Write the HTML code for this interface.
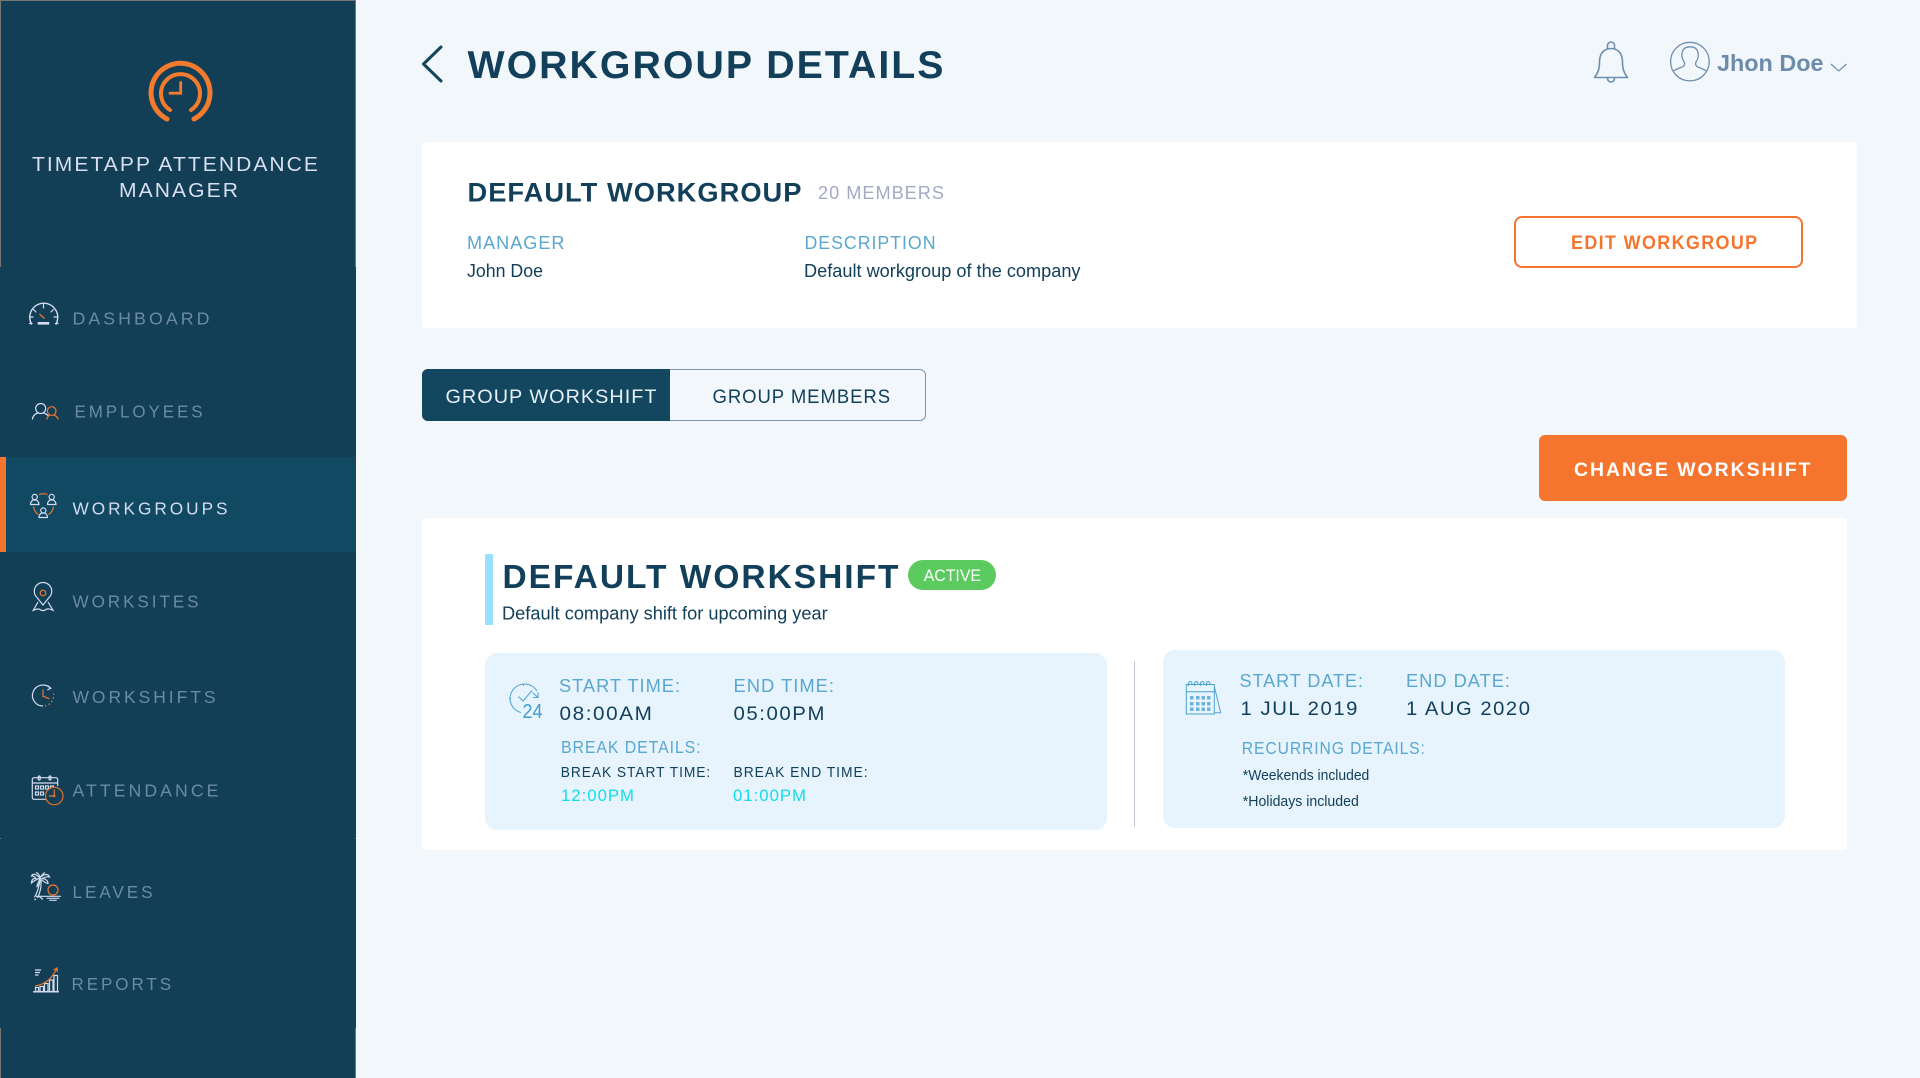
<!DOCTYPE html>
<html lang="en"><head><meta charset="utf-8"><title>Workgroup Details</title>
<style>
html,body{margin:0;padding:0;width:1920px;height:1078px;overflow:hidden;background:#f2f7fb}
body{position:relative;font-family:"Liberation Sans",sans-serif}
.b{position:absolute;box-sizing:border-box}
svg.o{position:absolute;left:0;top:0}
text{font-family:"Liberation Sans",sans-serif}
.nav{font-size:17.5px;letter-spacing:3px;fill:#6b8aa6}
.lab{font-size:18.5px;letter-spacing:1px;fill:#5aa7cf}
.val{font-size:19.5px;letter-spacing:1.5px;fill:#12405a}
.hd{font-weight:700;fill:#12405a}
.w{stroke:#d5dcf0;fill:none;stroke-width:1.2}
.r{stroke:#f0772e;fill:none;stroke-width:1.2}
.bl{stroke:#4ba3cf;fill:none;stroke-width:1}
</style></head><body>
<div class="b" style="left:0;top:0;width:356px;height:1078px;background:#123f55"></div>
<div class="b" style="left:0;top:0;width:356px;height:1px;background:#777"></div>
<div class="b" style="left:0;top:0;width:1px;height:267px;background:#777"></div>
<div class="b" style="left:355px;top:0;width:1px;height:267px;background:#777"></div>
<div class="b" style="left:0;top:1028px;width:1px;height:50px;background:#777"></div>
<div class="b" style="left:355px;top:1028px;width:1px;height:50px;background:#777"></div>
<div class="b" style="left:0;top:838px;width:1px;height:1px;background:#777"></div>
<div class="b" style="left:355px;top:838px;width:1px;height:1px;background:#777"></div>
<div class="b" style="left:0;top:457px;width:356px;height:95px;background:#114862;border-left:6px solid #f5752e"></div>
<div class="b" style="left:422px;top:142px;width:1435px;height:186px;background:#fff;border-radius:3px"></div>
<div class="b" style="left:1514px;top:216px;width:289px;height:52px;border:2px solid #f5752e;border-radius:8px;background:#fff"></div>
<div class="b" style="left:422px;top:369px;width:504px;height:52px;border:1px solid #7f95ad;border-radius:6px"></div>
<div class="b" style="left:422px;top:369px;width:248px;height:52px;background:#12475f;border-radius:6px 0 0 6px"></div>
<div class="b" style="left:1539px;top:435px;width:308px;height:66px;background:#f5752e;border-radius:6px"></div>
<div class="b" style="left:422px;top:518px;width:1425px;height:332px;background:#fff;border-radius:3px"></div>
<div class="b" style="left:485px;top:554px;width:8px;height:71px;background:#9adfff"></div>
<div class="b" style="left:908px;top:560px;width:88px;height:30px;background:#5ccb5f;border-radius:15px"></div>
<div class="b" style="left:485px;top:653px;width:622px;height:177px;background:#e7f4fe;border-radius:12px"></div>
<div class="b" style="left:1134px;top:661px;width:1px;height:166px;background:#c5c8dc"></div>
<div class="b" style="left:1163px;top:650px;width:622px;height:178px;background:#e7f4fe;border-radius:12px"></div>

<svg class="o" width="1920" height="1078" viewBox="0 0 1920 1078" xmlns="http://www.w3.org/2000/svg">
<!-- logo -->
<g fill="none" stroke="#f47a2d" stroke-linecap="round" transform="translate(0 0.5)">
<path stroke-width="5" d="M167 118.5A29.5 29.5 0 1 1 194 118.5"/>
<path stroke-width="4" d="M170 109.5A19.5 19.5 0 1 1 191 109.5"/>
<path stroke-width="2.8" d="M180.7 82V92.7H170"/>
</g>
<text x="32" y="171" font-size="20.5" letter-spacing="2" fill="#d9def0" textLength="288" lengthAdjust="spacingAndGlyphs">TIMETAPP ATTENDANCE</text>
<text x="119" y="197" font-size="20.5" letter-spacing="2" fill="#d9def0" textLength="121" lengthAdjust="spacingAndGlyphs">MANAGER</text>

<!-- nav labels -->
<text class="nav" x="72.500" y="324.700" textLength="140" lengthAdjust="spacingAndGlyphs">DASHBOARD</text>
<text class="nav" x="74.500" y="417.700" textLength="131" lengthAdjust="spacingAndGlyphs">EMPLOYEES</text>
<text class="nav" x="72.500" y="514.500" textLength="158" lengthAdjust="spacingAndGlyphs" style="fill:#d5dcf0">WORKGROUPS</text>
<text class="nav" x="72.500" y="607.500" textLength="129" lengthAdjust="spacingAndGlyphs">WORKSITES</text>
<text class="nav" x="72.500" y="703" textLength="146" lengthAdjust="spacingAndGlyphs">WORKSHIFTS</text>
<text class="nav" x="72.500" y="796.500" textLength="149" lengthAdjust="spacingAndGlyphs">ATTENDANCE</text>
<text class="nav" x="72.500" y="898" textLength="83" lengthAdjust="spacingAndGlyphs">LEAVES</text>
<text class="nav" x="71.500" y="990" textLength="102.500" lengthAdjust="spacingAndGlyphs">REPORTS</text>

<!-- dashboard icon -->
<g transform="translate(0 10)">
<g class="w" stroke-linecap="round">
<path stroke-width="1.4" d="M31.5 314A14 14 0 1 1 56 314"/><path d="M29.5 313.5H32M55.5 313.5H58M43.5 294.5V298M33.5 299.5L36 302M53.5 299.5L51 302M29.5 307H33M54 307H57.5"/>
</g>
<rect x="37.7" y="312" width="11.6" height="2.6" fill="#d5dcf0"/>
<path class="r" stroke-width="1.5" d="M39.5 304L44.5 308.5"/>
</g>
<!-- employees icon -->
<g transform="translate(0 13.500)">
<g class="w" stroke-width="1.5"><circle cx="40.7" cy="395" r="5"/><path d="M32.3 406C33 401.5 36 400 38 399.5M43.5 399.5C45.5 400 47.500 401 48.500 403"/></g>
<g class="r" stroke-width="1.4"><circle cx="51.7" cy="397.500" r="4.300"/><path d="M46.700 406C47.500 403 49 402 50 401.500M53.500 401.500C55.500 402 57.500 403 58.300 406"/></g>
</g>
<!-- workgroups icon -->
<g transform="translate(0 16)">
<g class="w" stroke-width="1">
<circle cx="34.700" cy="481" r="2.600"/><path d="M30.500 488.500C30.500 485.500 32.500 484.500 33 484H36.400C37 484.500 39 485.500 39 488.500Z"/>
<circle cx="51.700" cy="481" r="2.600"/><path d="M47.500 488.500C47.500 485.500 49.500 484.500 50 484H53.400C54 484.500 56 485.500 56 488.500Z"/>
<circle cx="43.300" cy="494.500" r="2.600"/><path d="M39 501.500C39 498.500 41 497.500 41.600 497H45C45.600 497.500 47.500 498.500 47.500 501.500Z"/>
</g>
<path class="r" stroke-width="1" d="M39 478.500C41 477.500 45 477.500 47.500 478.500M33.500 490.500C34 494 36 497 38.500 498.500M53.500 490.500C53 494 51 497 48.500 498.500"/>
</g>
<!-- worksites icon -->
<g transform="translate(0 2)">
<path class="w" stroke-width="1.3" d="M43 603L37 595.500A8.700 8.700 0 1 1 49 595.500Z"/>
<path class="w" stroke-width="1.200" d="M38 600L33.300 608.300C36 607 38 606.300 40 607.500C42 609 44 609 46 607.500C48 606.300 50 607 53 608.300L48 600"/>
<circle class="r" stroke-width="1.300" cx="43" cy="591" r="2.800"/>
</g>
<!-- workshifts icon -->
<g transform="translate(0 4.500)">
<path class="w" stroke-width="1.500" d="M50.500 683.700A10.500 10.500 0 1 0 43 701.500"/><path class="w" stroke-width="1.100" d="M47.500 681L50.800 683.700L47.300 685.500"/>
<path class="r" stroke-width="1.400" d="M43 685V691.700L49.300 694.300"/>
<path class="r" stroke-width="1.500" stroke-dasharray="1.400 2.400" d="M53.500 689A10.700 10.700 0 0 1 44.500 701.500"/>
</g>
<!-- attendance icon -->
<g transform="translate(0 7)">
<path class="w" d="M46 792.300H34A1.700 1.700 0 0 1 32.300 790.600V772.400A1.700 1.700 0 0 1 34 770.700H56A1.700 1.700 0 0 1 57.700 772.400V779"/><path class="w" d="M32.300 776H57.700"/>
<rect class="w" x="38.200" y="769" width="2" height="4" rx="1"/><rect class="w" x="49" y="769" width="2" height="4" rx="1"/>
<g class="w" stroke-width="1"><rect x="35.500" y="779" width="3" height="3"/><rect x="40.500" y="779" width="3" height="3"/><rect x="45.500" y="779" width="3" height="3"/><rect x="50.500" y="779" width="3" height="3"/><rect x="35.500" y="785" width="3" height="3"/><rect x="40.500" y="785" width="3" height="3"/></g>
<circle cx="54.300" cy="789" r="8.700" fill="#123f55" stroke="#e0702c" stroke-width="1.200"/>
<path class="r" stroke-width="1.100" d="M54.300 782.500V789H49"/><circle cx="54.300" cy="789" r="1.200" fill="#f0772e"/>
</g>
<!-- leaves icon -->
<g transform="translate(0 10)">
<g class="w" stroke-width="1.100">
<path d="M40 868C36 864 33 863 31.500 866C33.500 866 35 867 36 868.500C33 868 31.500 870 31.500 873C34 870.500 37 869.500 40 868C39 872 37 874 37 876.500C39.500 875 40.500 871.500 40 868C43 871 45 873 48 873.500C48 870.500 45 868.500 42 868.500C45 867 47.500 866.500 49.500 867C48.500 864 44 863 40 868C39.500 865.500 38.500 863 36 862.500M40 868C41 866 42 864 45 862.500"/>
<path d="M39.500 870C39.500 876 38 881 34.500 887.500M41 870C41.500 876 40.500 882 37.500 888"/>
<path d="M38 885.500L43 889.500M36 889L34.500 890"/>
<path d="M36 886.300H61M46.700 888.300H59.300M49.300 890.300H56.700"/>
</g>
<circle class="r" cx="53" cy="880" r="5" stroke-width="1.200"/>
</g>
<!-- reports icon -->
<g transform="translate(0 12.500)">
<g class="w" stroke-width="1">
<path d="M33 979.300H59" stroke-width="1.300"/>
<rect x="35.500" y="975" width="3" height="4"/><rect x="40" y="974" width="3.500" height="5"/><rect x="44.500" y="971" width="3.500" height="8"/><rect x="49.500" y="967.500" width="3.500" height="11.500"/><rect x="54" y="963" width="3.500" height="16"/>
<path d="M35 957.500H41M35 960H40M35 962.500H38.500"/>
</g>
<path class="r" stroke-width="1.200" d="M35 973.500C45 972 52 966 56.500 956.500M53.500 957.500L57 955.500L57.500 959.500"/>
</g>

<!-- header -->
<path d="M441 47L423.500 64L441 81" fill="none" stroke="#12455e" stroke-width="3" stroke-linecap="round" stroke-linejoin="round"/>
<text class="hd" x="467.500" y="78" font-size="39" letter-spacing="2" textLength="478" lengthAdjust="spacingAndGlyphs">WORKGROUP DETAILS</text>
<!-- bell -->
<g fill="none" stroke="#6f8fae" stroke-width="1.600" stroke-linejoin="round">
<path d="M1594.500 77.500C1598 73 1599.500 69 1599.500 62C1599.500 53.500 1604 48.500 1611 48.500C1618 48.500 1622.500 53.500 1622.500 62C1622.500 69 1624 73 1627.500 77.500Z"/>
<path d="M1607.500 48.800V45.500A3.500 3.500 0 0 1 1614.500 45.500V48.800"/>
<path d="M1607.500 77.500C1607 83.500 1615 83.500 1614.500 77.500"/>
</g>
<!-- avatar -->
<g fill="none" stroke="#6f8fae" stroke-width="1.300" transform="translate(0.6 0.300)">
<circle cx="1689.300" cy="61.300" r="19.300"/>
<path d="M1672.500 71C1675 69 1680 67.500 1683 66C1684 65 1684.300 63 1683.500 61.500C1681.500 58.500 1681 55 1681.500 52.500C1682.500 48 1686 46.500 1689.500 46.500C1693 46.500 1696.500 48 1697.500 52.500C1698 55 1697.500 58.500 1695.500 61.500C1694.700 63 1695 65 1696 66C1699 67.500 1703.500 69 1706 71"/>
</g>
<text x="1717" y="71" font-size="23" font-weight="700" fill="#6d8cab" textLength="106.500" lengthAdjust="spacingAndGlyphs">Jhon Doe</text>
<path d="M1831 64L1838.700 71L1846.500 64" fill="none" stroke="#6f8fae" stroke-width="1.200"/>

<!-- card 1 -->
<text class="hd" x="467.500" y="201.700" font-size="26.500" letter-spacing="1" textLength="335" lengthAdjust="spacingAndGlyphs">DEFAULT WORKGROUP</text>
<text x="818" y="199" font-size="18.500" letter-spacing="1" fill="#a5a9c4" textLength="127" lengthAdjust="spacingAndGlyphs">20 MEMBERS</text>
<text class="lab" x="467" y="249" textLength="98.500" lengthAdjust="spacingAndGlyphs">MANAGER</text>
<text class="lab" x="804.500" y="249" textLength="132" lengthAdjust="spacingAndGlyphs">DESCRIPTION</text>
<text x="467" y="277" font-size="18" fill="#12405a" textLength="76" lengthAdjust="spacingAndGlyphs">John Doe</text>
<text x="804" y="277" font-size="18" fill="#12405a" textLength="276.500" lengthAdjust="spacingAndGlyphs">Default workgroup of the company</text>
<text x="1571" y="249" font-size="19.500" font-weight="700" letter-spacing="1.500" fill="#f5752e" textLength="187.500" lengthAdjust="spacingAndGlyphs">EDIT WORKGROUP</text>

<!-- tabs -->
<text x="445.500" y="403" font-size="19.500" letter-spacing="1" fill="#e8f0f6" textLength="212" lengthAdjust="spacingAndGlyphs">GROUP WORKSHIFT</text>
<text x="712.500" y="403" font-size="19.500" letter-spacing="1" fill="#12405a" textLength="178.500" lengthAdjust="spacingAndGlyphs">GROUP MEMBERS</text>
<text x="1574" y="476" font-size="19.500" font-weight="700" letter-spacing="2" fill="#fff" textLength="238.500" lengthAdjust="spacingAndGlyphs">CHANGE WORKSHIFT</text>

<!-- card 2 -->
<text class="hd" x="502.500" y="588" font-size="33.500" letter-spacing="2" textLength="398" lengthAdjust="spacingAndGlyphs">DEFAULT WORKSHIFT</text>
<text x="923.700" y="581" font-size="16.500" fill="#fff" textLength="57.300" lengthAdjust="spacingAndGlyphs">ACTIVE</text>
<text x="502" y="619.300" font-size="18" fill="#12405a" textLength="325.700" lengthAdjust="spacingAndGlyphs">Default company shift for upcoming year</text>

<!-- panel 1 -->
<g class="bl">
<path d="M537 691A14.500 14.500 0 1 0 521 712.500"/>
<path d="M518.500 696.500L523 701L532 690.500M532.500 692.500L538 697.500M538 692.500V697.500H533"/>
<path d="M509 698.500H511M523.500 684V686"/>
</g>
<text x="522.500" y="717.800" font-size="20" fill="#3d9fcb" textLength="20" lengthAdjust="spacingAndGlyphs">24</text>
<text class="lab" x="559" y="692" textLength="122" lengthAdjust="spacingAndGlyphs">START TIME:</text>
<text class="lab" x="733.500" y="692" textLength="101.500" lengthAdjust="spacingAndGlyphs">END TIME:</text>
<text class="val" x="559.500" y="720" textLength="94" lengthAdjust="spacingAndGlyphs">08:00AM</text>
<text class="val" x="733.500" y="720" textLength="92.500" lengthAdjust="spacingAndGlyphs">05:00PM</text>
<text class="lab" x="561" y="753" style="font-size:17.500px" textLength="140.500" lengthAdjust="spacingAndGlyphs">BREAK DETAILS:</text>
<text x="560.700" y="777" font-size="14.500" letter-spacing="1" fill="#12405a" textLength="150.500" lengthAdjust="spacingAndGlyphs">BREAK START TIME:</text>
<text x="733.500" y="777" font-size="14.500" letter-spacing="1" fill="#12405a" textLength="135" lengthAdjust="spacingAndGlyphs">BREAK END TIME:</text>
<text x="561" y="801" font-size="17" letter-spacing="1" fill="#10dde8" textLength="74" lengthAdjust="spacingAndGlyphs">12:00PM</text>
<text x="733" y="801" font-size="17" letter-spacing="1" fill="#10dde8" textLength="74" lengthAdjust="spacingAndGlyphs">01:00PM</text>

<!-- panel 2 -->
<g class="bl" stroke-width="1.100">
<path d="M1214.300 686.500L1220.700 712.700H1214.300"/>
<rect x="1186.300" y="684.500" width="28" height="29.500"/>
<path d="M1186.300 691.700H1214.300"/>
<path d="M1188.500 686C1187.500 681 1192 680 1192 684M1194.500 686C1193.500 681 1198 680 1198 684M1200.500 686C1199.500 681 1204 680 1204 684M1206.500 686C1205.500 681 1210 680 1210 684"/>
</g>
<g fill="#6db4d8">
<rect x="1190" y="696" width="3.500" height="3.500"/><rect x="1196" y="696" width="3.500" height="3.500"/><rect x="1201.500" y="696" width="3.500" height="3.500"/><rect x="1207" y="696" width="3.500" height="3.500"/>
<rect x="1190" y="702" width="3.500" height="3.500"/><rect x="1196" y="702" width="3.500" height="3.500"/><rect x="1201.500" y="702" width="3.500" height="3.500"/><rect x="1207" y="702" width="3.500" height="3.500"/>
<rect x="1190" y="707.500" width="3.500" height="3.500"/><rect x="1196" y="707.500" width="3.500" height="3.500"/><rect x="1201.500" y="707.500" width="3.500" height="3.500"/><rect x="1207" y="707.500" width="3.500" height="3.500"/>
</g>
<text class="lab" x="1239.500" y="687" textLength="124.500" lengthAdjust="spacingAndGlyphs">START DATE:</text>
<text class="lab" x="1406" y="687" textLength="105" lengthAdjust="spacingAndGlyphs">END DATE:</text>
<text class="val" x="1240.500" y="715" textLength="118.500" lengthAdjust="spacingAndGlyphs">1 JUL 2019</text>
<text class="val" x="1406" y="715" textLength="125.500" lengthAdjust="spacingAndGlyphs">1 AUG 2020</text>
<text class="lab" x="1241.800" y="754" style="font-size:17.500px" textLength="184" lengthAdjust="spacingAndGlyphs">RECURRING DETAILS:</text>
<text x="1242.800" y="780" font-size="14.500" fill="#12405a" textLength="126.500" lengthAdjust="spacingAndGlyphs">*Weekends included</text>
<text x="1242.800" y="806" font-size="14.500" fill="#12405a" textLength="116" lengthAdjust="spacingAndGlyphs">*Holidays included</text>
</svg>
</body></html>
